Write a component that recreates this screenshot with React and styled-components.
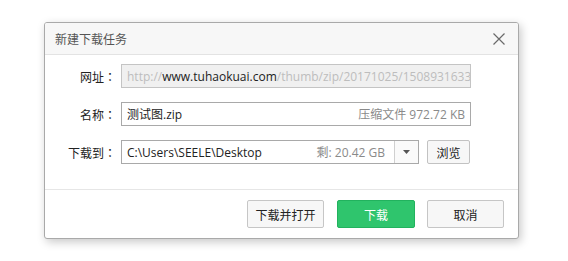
import React from "react";
import styled, { createGlobalStyle } from "styled-components";

const Global = createGlobalStyle`
  html, body { margin: 0; padding: 0; background: #ffffff; }
  body { font-family: "Open Sans", "Noto Sans CJK SC", sans-serif; font-size: 12px; color: #222; }
  * { box-sizing: border-box; }
`;

const Page = styled.div`
  padding: 22px 0 0 44px;
  width: 568px;
  height: 261px;
`;

const Dialog = styled.div`
  width: 475px;
  height: 217px;
  border: 1px solid #a9a9a9;
  border-radius: 3px;
  background: #fff;
  box-shadow: 2px 3px 10px rgba(0, 0, 0, 0.22);
  display: flex;
  flex-direction: column;
  overflow: hidden;
`;

const TitleBar = styled.div`
  height: 32px;
  flex: none;
  background: #f7f7f7;
  border-bottom: 1px solid #e3e3e3;
  display: flex;
  align-items: center;
  justify-content: space-between;
  padding: 0 12px 0 10px;
`;

const Title = styled.div`
  color: #555;
  font-size: 12px;
  font-family: "Noto Sans CJK SC", sans-serif;
`;

const Close = styled.button`
  border: none;
  background: none;
  padding: 0;
  width: 14px;
  height: 14px;
  display: flex;
  cursor: pointer;
`;

const Body = styled.div`
  flex: 1;
  padding: 9px 0 0 0;
  display: flex;
  flex-direction: column;
  gap: 14px;
`;

const Row = styled.div`
  display: flex;
  align-items: center;
  height: 24px;
`;

const Label = styled.div`
  width: 71px;
  margin-right: 5px;
  text-align: right;
  font-family: "Noto Sans CJK SC", sans-serif;
  font-size: 12px;
  color: #222;
  white-space: nowrap;
`;

const Colon = styled.span`
  font-family: "Noto Sans CJK JP", sans-serif;
`;

const Field = styled.div`
  width: ${(p) => p.$w}px;
  height: 24px;
  border: 1px solid ${(p) => (p.$disabled ? "#c4c4c4" : "#a9a9a9")};
  background: ${(p) => (p.$disabled ? "#f0f0f0" : "#fff")};
  display: flex;
  align-items: center;
  overflow: hidden;
  white-space: nowrap;
`;

const FieldText = styled.div`
  flex: 1;
  padding-left: 5px;
  overflow: hidden;
  white-space: nowrap;
  font-size: 12px;
  color: #222;
`;

const Dim = styled.span`
  color: #bdbdbd;
`;

const Meta = styled.div`
  color: #8a8a8a;
  padding-right: ${(p) => p.$pr}px;
  font-size: 12px;
`;

const Drop = styled.div`
  width: 24px;
  height: 100%;
  border-left: 1px solid #d0d0d0;
  background: #fafafa;
  display: flex;
  align-items: center;
  justify-content: center;
`;

const SmallButton = styled.button`
  margin-left: 8px;
  width: 43px;
  height: 24px;
  border: 1px solid #c2c2c2;
  border-radius: 2px;
  background: #f7f7f7;
  font-family: "Noto Sans CJK SC", sans-serif;
  font-size: 12px;
  color: #222;
  padding: 0;
`;

const Footer = styled.div`
  flex: none;
  height: 49px;
  border-top: 1px solid #e6e6e6;
  display: flex;
  justify-content: flex-end;
  align-items: center;
  gap: 12px;
  padding: 0 14px 0 0;
`;

const Button = styled.button`
  width: ${(p) => p.$w}px;
  height: 28px;
  border-radius: 2px;
  border: 1px solid ${(p) => (p.$primary ? "#22b25e" : "#c6c6c6")};
  background: ${(p) => (p.$primary ? "#2fc56d" : "#f7f7f7")};
  color: ${(p) => (p.$primary ? "#fff" : "#222")};
  font-family: "Noto Sans CJK SC", sans-serif;
  font-size: 12px;
  padding: 0;
  margin-right: ${(p) => p.$mr || 0}px;
`;

export default function App() {
  return (
    <Page>
      <Global />
      <Dialog>
        <TitleBar>
          <Title>新建下载任务</Title>
          <Close aria-label="close">
            <svg width="14" height="14" viewBox="0 0 14 14">
              <path d="M1.5 1.5 L12.5 12.5 M12.5 1.5 L1.5 12.5" stroke="#6a6a6a" strokeWidth="1.2" fill="none" />
            </svg>
          </Close>
        </TitleBar>
        <Body>
          <Row>
            <Label>网址<Colon>：</Colon></Label>
            <Field $w={350} $disabled>
              <FieldText>
                <Dim>http://</Dim>www.tuhaokuai.com<Dim>/thumb/zip/20171025/1508931633.zip</Dim>
              </FieldText>
            </Field>
          </Row>
          <Row>
            <Label>名称<Colon>：</Colon></Label>
            <Field $w={350}>
              <FieldText>测试图.zip</FieldText>
              <Meta $pr={5}>压缩文件 972.72 KB</Meta>
            </Field>
          </Row>
          <Row>
            <Label>下载到<Colon>：</Colon></Label>
            <Field $w={298}>
              <FieldText>C:\Users\SEELE\Desktop</FieldText>
              <Meta $pr={9}>剩: 20.42 GB</Meta>
              <Drop>
                <svg width="7" height="4" viewBox="0 0 7 4">
                  <path d="M0 0 L7 0 L3.5 4 Z" fill="#555" />
                </svg>
              </Drop>
            </Field>
            <SmallButton>浏览</SmallButton>
          </Row>
        </Body>
        <Footer>
          <Button $w={77} $mr={1}>下载并打开</Button>
          <Button $w={78} $primary>下载</Button>
          <Button $w={77}>取消</Button>
        </Footer>
      </Dialog>
    </Page>
  );
}
